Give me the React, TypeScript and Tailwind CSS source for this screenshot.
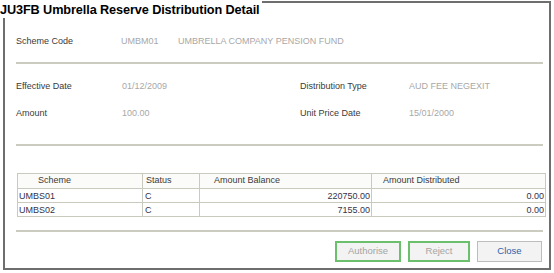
const rows = [
  { scheme: "UMBS01", status: "C", balance: "220750.00", distributed: "0.00" },
  { scheme: "UMBS02", status: "C", balance: "7155.00", distributed: "0.00" },
];

function Field({ label, value, labelW }: { label: string; value: string; labelW: string }) {
  return (
    <div className="flex items-center h-[16px]">
      <div className={`${labelW} text-[#3a3a3a]`}>{label}</div>
      <div className="text-[#a8a8a8]">{value}</div>
    </div>
  );
}

function Divider() {
  return <div className="h-[2px] bg-[#cbcbbf] ml-[11px] mr-[6px]" />;
}

export default function App() {
  return (
    <div className="relative w-[554px] h-[273px] bg-white font-['Liberation_Sans',Arial,sans-serif] text-[9px] overflow-hidden">
      {/* title sits over the top border */}
      <div className="absolute left-0 top-0 h-[18px] pr-[2px] bg-white text-[12.7px] font-bold text-black leading-[20px] tracking-[-0.1px]">
        JU3FB Umbrella Reserve Distribution Detail
      </div>

      <div className="ml-[3px] mt-[1px] w-[548px] h-[269px] border-2 border-[#6e6e6e] flex flex-col">
        <div className="mt-[31px] pl-[11px] flex items-center h-[16px]">
          <div className="w-[105px] text-[#3a3a3a]">Scheme Code</div>
          <div className="w-[57px] text-[#a8a8a8]">UMBM01</div>
          <div className="text-[#a8a8a8]">UMBRELLA COMPANY PENSION FUND</div>
        </div>

        <div className="mt-[12px]">
          <Divider />
        </div>

        <div className="mt-[15px] pl-[11px] grid grid-cols-[284px_1fr] gap-y-[11px]">
          <Field label="Effective Date" value="01/12/2009" labelW="w-[106px]" />
          <Field label="Distribution Type" value="AUD FEE NEGEXIT" labelW="w-[109px]" />
          <Field label="Amount" value="100.00" labelW="w-[106px]" />
          <Field label="Unit Price Date" value="15/01/2000" labelW="w-[109px]" />
        </div>

        <div className="mt-[22px]">
          <Divider />
        </div>

        <div className="mt-[27px] ml-[12px] mr-[5px]">
          <table className="w-[528px] border-collapse table-fixed text-[9px]">
            <colgroup>
              <col className="w-[125px]" />
              <col className="w-[57px]" />
              <col className="w-[172px]" />
              <col className="w-[174px]" />
            </colgroup>
            <thead>
              <tr className="h-[15px] bg-[#fbfbf9] text-[#3a3a3a]">
                <th className="border border-[#c9c9bd] font-normal text-left pl-[20px]">Scheme</th>
                <th className="border border-[#c9c9bd] font-normal text-left pl-[3px]">Status</th>
                <th className="border border-[#c9c9bd] font-normal text-left pl-[14px]">Amount Balance</th>
                <th className="border border-[#c9c9bd] font-normal text-left pl-[11px]">Amount Distributed</th>
              </tr>
            </thead>
            <tbody>
              {rows.map((r) => (
                <tr key={r.scheme} className="h-[14px] text-[#33334a]">
                  <td className="border border-[#c9c9bd] px-[1px] leading-[12px]">{r.scheme}</td>
                  <td className="border border-[#c9c9bd] px-[2px] leading-[12px]">{r.status}</td>
                  <td className="border border-[#c9c9bd] px-[1px] text-right leading-[12px]">{r.balance}</td>
                  <td className="border border-[#c9c9bd] px-[1px] text-right leading-[12px]">{r.distributed}</td>
                </tr>
              ))}
            </tbody>
          </table>
        </div>

        <div className="mt-[13px]">
          <Divider />
        </div>

        <div className="mt-[9px] flex justify-end gap-[7px] mr-[7px] text-[9.5px]">
          <button className="w-[66px] h-[21px] border-2 border-[#6cbf6c] bg-[#f3f3f3] text-[#a4a4a4]">
            Authorise
          </button>
          <button className="w-[62px] h-[21px] border-2 border-[#6cbf6c] bg-[#f3f3f3] text-[#a4a4a4]">
            Reject
          </button>
          <button className="w-[65px] h-[21px] border border-[#bdbdbd] bg-[#f3f3f3] text-[#2f62a8]">
            Close
          </button>
        </div>
      </div>
    </div>
  );
}
